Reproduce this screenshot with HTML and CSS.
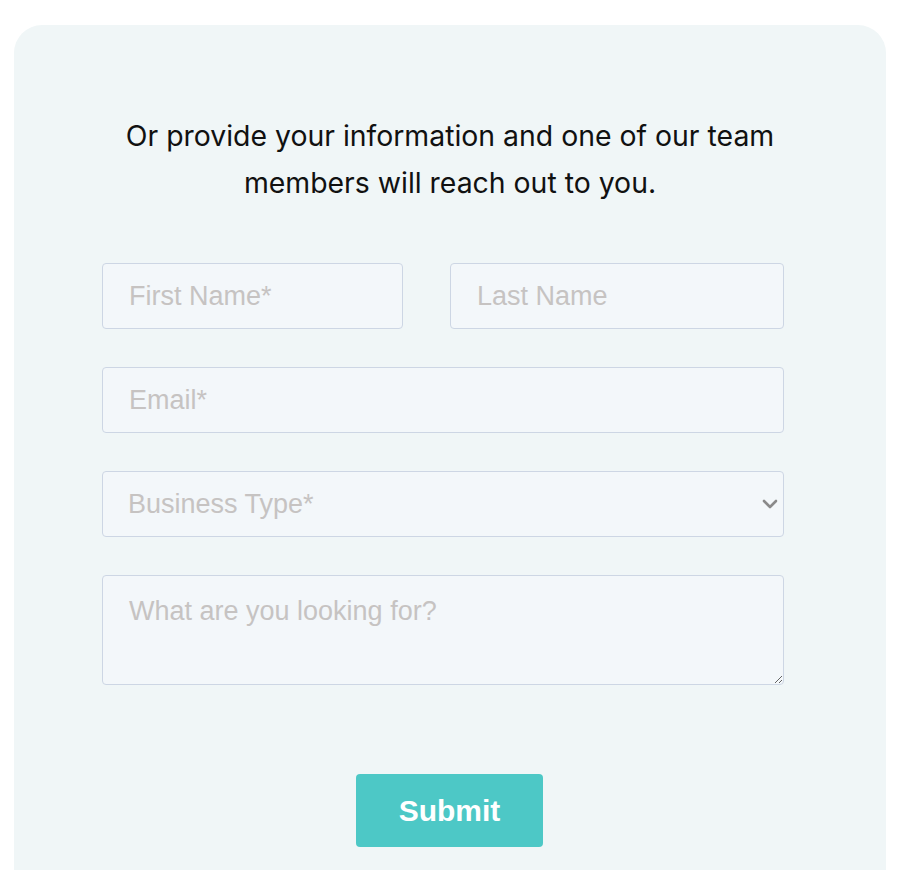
FILE: index.html
```html
<!DOCTYPE html>
<html lang="en">
<head>
<meta charset="utf-8">
<title>Contact</title>
<link rel="stylesheet" href="styles.css">
</head>
<body>
<div class="card">
  <p class="intro">Or provide your information and one of our team<br>members will reach out to you.</p>
  <form class="form" onsubmit="return false">
    <div class="row">
      <input class="field first" type="text" placeholder="First Name*">
      <input class="field last" type="text" placeholder="Last Name">
    </div>
    <input class="field" type="email" placeholder="Email*">
    <div class="select-wrap">
      <select class="field select">
        <option value="" selected disabled>Business Type*</option>
        <option>Retail</option>
        <option>Restaurant</option>
      </select>
      <svg class="chev" width="16" height="10" viewBox="0 0 16 10" aria-hidden="true"><path d="M2 2 L8 8 L14 2" fill="none" stroke="#8a8a8a" stroke-width="2.6" stroke-linecap="round" stroke-linejoin="round"/></svg>
    </div>
    <textarea class="field area" placeholder="What are you looking for?"></textarea>
    <div class="actions">
      <button class="submit" type="submit">Submit</button>
    </div>
  </form>
</div>
</body>
</html>
```
FILE: styles.css
```css
html, body {
  margin: 0;
  padding: 0;
  background: #ffffff;
}
body {
  height: 870px;
  overflow: hidden;
}
.card {
  margin: 25px 14px 0;
  width: 872px;
  height: 845px;
  box-sizing: border-box;
  background: #f0f6f7;
  border-radius: 28px 28px 0 0;
  padding-top: 87px;
}
.intro {
  margin: 0;
  text-align: center;
  font-family: Inter, "Liberation Sans", sans-serif;
  font-size: 28.4px;
  line-height: 47px;
  color: #111111;
}
.form {
  margin: 57px 0 0 88px;
  width: 682px;
  display: flex;
  flex-direction: column;
  gap: 38px;
}
.row {
  display: flex;
  gap: 47px;
}
.field {
  box-sizing: border-box;
  height: 66px;
  width: 100%;
  background: #f3f7fa;
  border: 1.5px solid #cdd6e4;
  border-radius: 4px;
  padding: 0 26px;
  font-family: "Liberation Sans", Arial, sans-serif;
  font-size: 27px;
  color: #333;
  outline: none;
}
.field::placeholder {
  color: #c6c3c2;
}
.first { width: 301px; flex: none; }
.last { flex: 1; }
.select-wrap {
  position: relative;
}
.select {
  display: block;
  -webkit-appearance: none;
  appearance: none;
  color: #c6c3c2;
  padding-left: 25px;
  padding-right: 40px;
}
.chev {
  position: absolute;
  right: 6px;
  top: 28px;
  pointer-events: none;
}
.area {
  height: 110px;
  padding: 20px 26px;
  resize: vertical;
  display: block;
}
.actions {
  display: flex;
  justify-content: center;
  padding-top: 51px;
  margin-left: 13px;
}
.submit {
  width: 187px;
  height: 73px;
  border: none;
  border-radius: 4px;
  background: #4dc8c6;
  color: #ffffff;
  font-family: "Liberation Sans", Arial, sans-serif;
  font-weight: 700;
  font-size: 30px;
  cursor: pointer;
}
```
